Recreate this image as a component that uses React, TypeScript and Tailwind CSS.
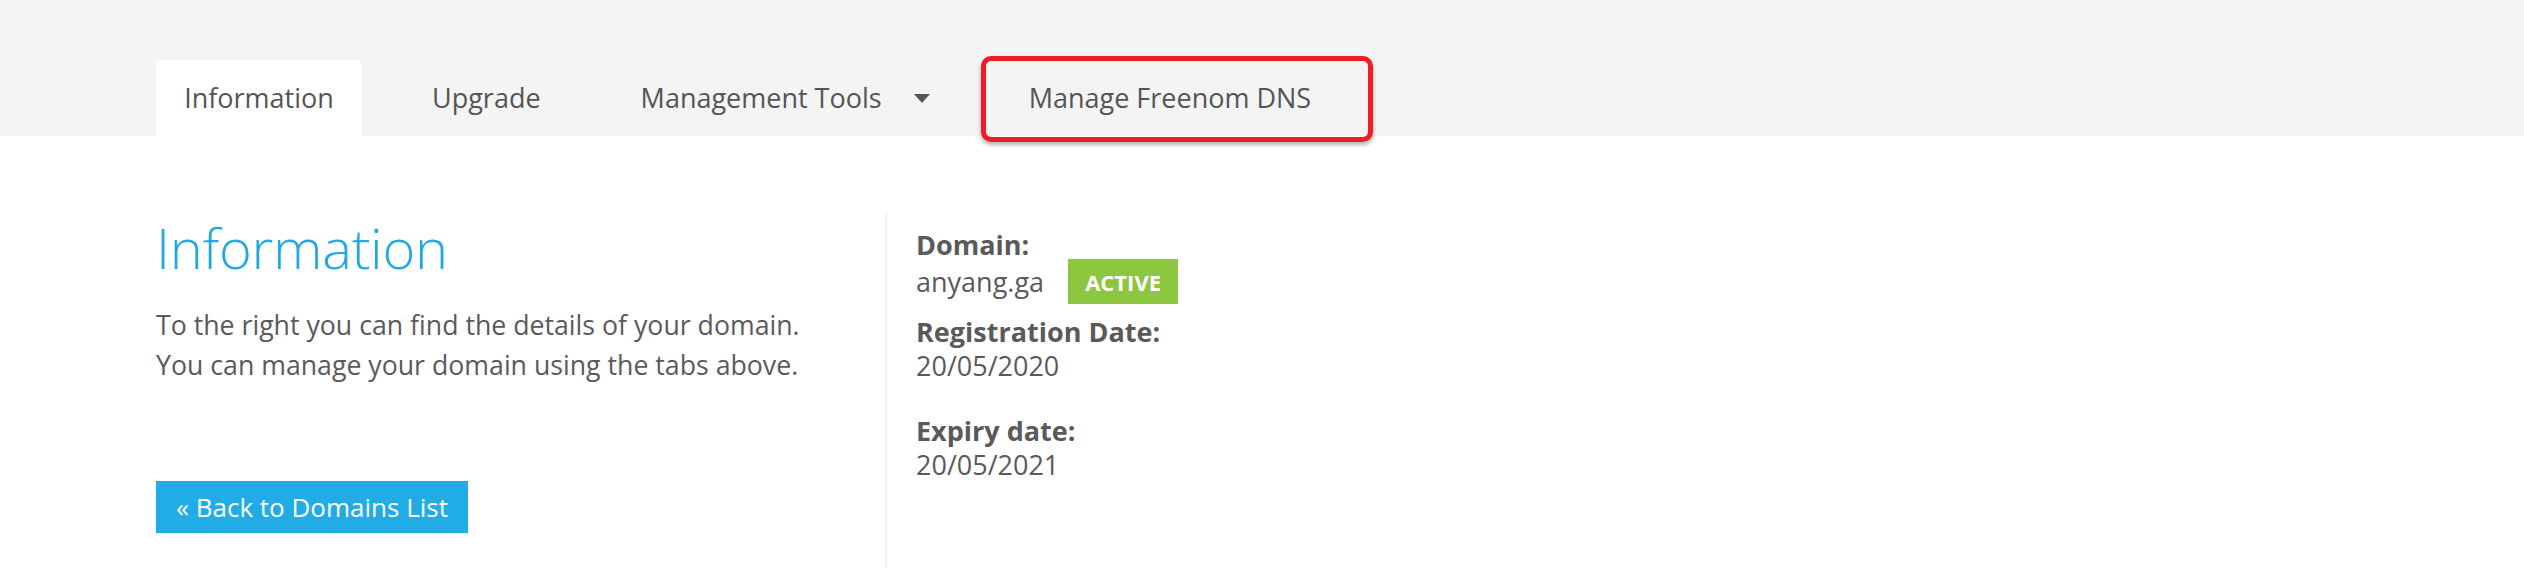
import React from "react";

function Caret() {
  return (
    <svg width="16" height="9" viewBox="0 0 16 9" className="ml-[32px]">
      <path d="M0 0 H16 L8 9 Z" fill="#555555" />
    </svg>
  );
}

export default function App() {
  return (
    <div className="w-[2524px] h-[568px] bg-white font-['Open_Sans',sans-serif] text-[#5a5a5a] overflow-hidden">
      {/* Tab bar */}
      <div className="h-[136px] bg-[#f4f4f4] flex items-end pl-[156px]">
        <div className="h-[76px] w-[206px] bg-white rounded-t-[6px] flex items-center justify-center text-[27px] text-[#555]">
          Information
        </div>
        <div className="h-[76px] ml-[40px] px-[30px] flex items-center text-[27px] text-[#555]">
          Upgrade
        </div>
        <div className="h-[76px] ml-[40px] px-[30px] flex items-center text-[27px] text-[#555]">
          Management Tools
          <Caret />
        </div>
        <div className="relative h-[76px] ml-[21px] flex items-center">
          <div className="absolute left-0 top-[-4px] w-[392px] h-[86px] border-[5px] border-[#ee1c25] rounded-[10px] shadow-[0_3px_4px_rgba(0,0,0,0.3)]" />
          <div className="pl-[48px] pr-[56px] text-[27px] text-[#555]">Manage Freenom DNS</div>
        </div>
      </div>

      {/* Content */}
      <div className="flex pl-[156px] pt-[78px]">
        <div className="w-[729px] flex flex-col items-start">
          <h1 className="text-[56px] leading-[67px] font-light text-[#22a9e2] tracking-[-0.3px]">Information</h1>
          <p className="mt-[24px] text-[26.7px] leading-[40px] text-[#5a5a5a]">
            To the right you can find the details of your domain.
            <br />
            You can manage your domain using the tabs above.
          </p>
          <button className="mt-[96px] w-[312px] h-[52px] bg-[#21ace6] text-white text-[26px] flex items-center justify-center">
            « Back to Domains List
          </button>
        </div>
        <div className="w-[2px] bg-[#efefef] h-[360px]" />
        <div className="pl-[29px] pt-[14px] text-[27px] leading-[34px] text-[#5a5a5a]">
          <div className="font-bold">Domain:</div>
          <div className="flex items-center h-[45px] -mt-[3px]">
            <span>anyang.ga</span>
            <span className="ml-[24px] h-[45px] w-[110px] bg-[#8dc63f] text-white font-bold text-[22px] flex items-center justify-center">
              ACTIVE
            </span>
          </div>
          <div className="font-bold mt-[11px]">Registration Date:</div>
          <div>20/05/2020</div>
          <div className="font-bold mt-[31px]">Expiry date:</div>
          <div>20/05/2021</div>
        </div>
      </div>
    </div>
  );
}
